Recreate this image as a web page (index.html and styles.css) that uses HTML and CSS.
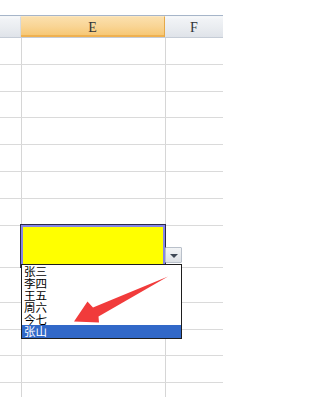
FILE: index.html
```html
<!DOCTYPE html>
<html>
<head>
<meta charset="utf-8">
<link rel="stylesheet" href="styles.css">
</head>
<body>
<div class="sheet">
  <div class="top"></div>
  <div class="header">
    <div class="hcell cd"></div>
    <div class="hcell ce active">E</div>
    <div class="hcell cf">F</div>
  </div>
  <div class="grid">
    <div class="row r27"><div class="cell cd"></div><div class="cell ce"></div><div class="cell cf"></div></div>
    <div class="row r27"><div class="cell cd"></div><div class="cell ce"></div><div class="cell cf"></div></div>
    <div class="row r26"><div class="cell cd"></div><div class="cell ce"></div><div class="cell cf"></div></div>
    <div class="row r27"><div class="cell cd"></div><div class="cell ce"></div><div class="cell cf"></div></div>
    <div class="row r27"><div class="cell cd"></div><div class="cell ce"></div><div class="cell cf"></div></div>
    <div class="row r27"><div class="cell cd"></div><div class="cell ce"></div><div class="cell cf"></div></div>
    <div class="row r27"><div class="cell cd"></div><div class="cell ce"></div><div class="cell cf"></div></div>
    <div class="row r42"><div class="cell cd"></div><div class="cell ce selected"><span class="handle"></span></div><div class="cell cf"></div></div>
    <div class="row r35"><div class="cell cd"></div><div class="cell ce"></div><div class="cell cf"></div></div>
    <div class="row r27"><div class="cell cd"></div><div class="cell ce"></div><div class="cell cf"></div></div>
    <div class="row r26"><div class="cell cd"></div><div class="cell ce"></div><div class="cell cf"></div></div>
    <div class="row r27"><div class="cell cd"></div><div class="cell ce"></div><div class="cell cf"></div></div>
    <div class="row r15"><div class="cell cd"></div><div class="cell ce"></div><div class="cell cf"></div></div>
  </div>

  <div class="dropbtn"><span class="tri"></span></div>
  <div class="listbox">
    <div class="item">张三</div>
    <div class="item">李四</div>
    <div class="item">王五</div>
    <div class="item">周六</div>
    <div class="item">今七</div>
    <div class="item sel">张山</div>
  </div>

  <svg class="arrow" width="223" height="397" viewBox="0 0 223 397">
    <polygon points="74,321.5 87.5,301.5 93,307.5 168,276.5 98.5,316.5 99,322.5" fill="#f13b3b"/>
  </svg>
</div>
</body>
</html>
```

FILE: styles.css
```css
html, body {
  margin: 0;
  padding: 0;
  background: #ffffff;
}
.sheet {
  position: relative;
  width: 223px;
  height: 397px;
  overflow: hidden;
  background: #ffffff;
}
.top {
  height: 15px;
  background: #ffffff;
}
.header {
  display: flex;
  height: 23px;
  box-sizing: border-box;
  border-top: 1px solid #a6b5c9;
  border-bottom: 1px solid #c5ccd6;
  font-family: "Liberation Serif", "DejaVu Serif", serif;
  font-size: 14px;
  color: #2f3338;
}
.hcell {
  box-sizing: border-box;
  height: 100%;
  display: flex;
  align-items: center;
  justify-content: center;
  padding-top: 2px;
  background: linear-gradient(#f7f8fa 0, #f1f3f6 10%, #e9ecf0 55%, #dfe3e9 100%);
  border-top: 1px solid #f4f6f8;
}
.hcell.cd { width: 21px; border-right: 1px solid #d5dae1; }
.hcell.ce { width: 144px; }
.hcell.cf { flex: 1; }
.hcell.active {
  background: linear-gradient(#fbe0ad 0, #f9d596 45%, #f6c56e 100%);
  border-top: 1px solid #fbe6bf;
  border-right: 1px solid #e5a94a;
  box-shadow: inset 0 -2px 0 #efb150;
}

.grid {
  display: flex;
  flex-direction: column;
}
.row {
  display: flex;
  box-sizing: border-box;
  border-bottom: 1px solid #dadada;
}
.r27 { height: 27px; }
.r26 { height: 26px; }
.r42 { height: 42px; }
.r35 { height: 35px; }
.r15 { height: 15px; border-bottom: none; }
.cell {
  box-sizing: border-box;
  height: 100%;
}
.cell.cd { width: 22px; border-right: 1px solid #d6d6d6; }
.cell.ce { width: 144px; border-right: 1px solid #d6d6d6; }
.cell.cf { flex: 1; }

.cell.selected {
  position: relative;
  background: #ffff00;
  z-index: 2;
}
.cell.selected::before {
  content: "";
  position: absolute;
  left: -2px;
  top: -2px;
  right: -1px;
  bottom: -1px;
  border: 1px solid #2b2b4a;
  box-shadow: inset 0 0 0 2px #8585e6;
}
.handle {
  position: absolute;
  right: -2px;
  bottom: -3px;
  width: 4px;
  height: 4px;
  background: #222244;
  z-index: 3;
}

.dropbtn {
  position: absolute;
  left: 165px;
  top: 247px;
  width: 17px;
  height: 16px;
  box-sizing: border-box;
  border: 1px solid #b9c0ca;
  border-radius: 1px;
  background: linear-gradient(#f2f4f6, #dde1e6);
  display: flex;
  align-items: center;
  justify-content: center;
  z-index: 4;
}
.tri {
  width: 0;
  height: 0;
  border-left: 4px solid transparent;
  border-right: 4px solid transparent;
  border-top: 4px solid #3f4856;
  margin-top: 1px;
}

.listbox {
  position: absolute;
  left: 21px;
  top: 264px;
  width: 161px;
  height: 75px;
  box-sizing: border-box;
  border: 1px solid #1e1e1e;
  background: #ffffff;
  z-index: 4;
  font-family: "Noto Sans CJK SC", "Noto Sans", sans-serif;
  font-size: 11.5px;
  line-height: 12px;
  color: #000000;
}
.item {
  height: 12px;
  padding-left: 2px;
  white-space: nowrap;
}
.item.sel {
  height: 13px;
  line-height: 13px;
  background: #3168c8;
  color: #ffffff;
}

.arrow {
  position: absolute;
  left: 0;
  top: 0;
  z-index: 5;
  pointer-events: none;
}
```
